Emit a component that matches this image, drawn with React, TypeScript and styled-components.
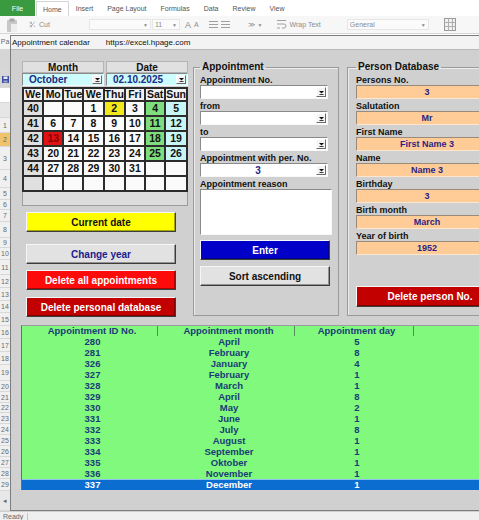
import React from 'react';
import styled, { createGlobalStyle } from 'styled-components';
import { Scissors } from 'lucide-react';

const GlobalStyle = createGlobalStyle`
  html, body { margin: 0; padding: 0; background: #ffffff; }
  body { font-family: "Liberation Sans", Arial, sans-serif; }
  * { box-sizing: border-box; }
`;

const Screen = styled.div`
  width: 479px;
  height: 520px;
  overflow: hidden;
  display: flex;
  flex-direction: column;
  background: #ffffff;
`;

/* ---------- ribbon ---------- */

const TabBar = styled.div`
  height: 16px;
  flex: none;
  display: flex;
  font-size: 7px;
  color: #555;
  background: #ffffff;
`;

const Tab = styled.div<{ $kind?: 'file' | 'active' }>`
  display: flex;
  align-items: center;
  justify-content: center;
  padding: 0 7px;
  ${p => p.$kind === 'file' && `width: 35px; background: #3a9a3f; color: #fff; margin-right: 1px;`}
  ${p => p.$kind === 'active' && `background: #fff; border: 1px solid #d4d4d4; border-bottom: none; margin-top: 1px; padding: 0 6px;`}
`;

const ToolRow = styled.div`
  height: 18px;
  flex: none;
  display: flex;
  align-items: center;
  background: #f7f7f7;
  border-bottom: 1px solid #d6d6d6;
  font-size: 7px;
  color: #8c8c8c;
`;

const Tool = styled.div<{ $ml: number; $w?: number }>`
  margin-left: ${p => p.$ml}px;
  ${p => (p.$w ? `width: ${p.$w}px;` : '')}
  flex: none;
  display: flex;
  align-items: center;
  gap: 3px;
`;

const DropBox = styled(Tool)`
  justify-content: space-between;
  height: 11px;
  padding: 0 2px;
  background: #fbfbfb;
  border: 1px solid #e6e6e6;
`;

/* ---------- sheet + dialog ---------- */

const Workspace = styled.div`
  flex: 1;
  display: flex;
  min-height: 0;
`;

const Strip = styled.div`
  width: 10px;
  flex: none;
  display: flex;
  flex-direction: column;
  background: #e4e4e4;
`;

const StripCell = styled.div<{ $h: number; $bg: string }>`
  height: ${p => p.$h}px;
  flex: none;
  background: ${p => p.$bg};
  display: flex;
  align-items: center;
  justify-content: center;
  font-size: 7px;
  color: #6a6a6a;
  border-bottom: 1px solid #d8d8d8;
  overflow: hidden;
  white-space: nowrap;
`;

const Dialog = styled.div`
  flex: none;
  width: 500px;
  height: 476px;
  margin-top: 1px;
  display: flex;
  flex-direction: column;
  background: #d0d0d0;
  border: 1px solid #7c7c7c;
  border-right: none;
`;

const TitleBar = styled.div`
  height: 14px;
  flex: none;
  display: flex;
  align-items: center;
  padding-left: 1px;
  gap: 16px;
  background: #f3f3f3;
  border-bottom: 1px solid #b8b8b8;
  font-size: 8px;
  color: #111;
`;

const Body = styled.div`
  flex: 1;
  padding: 11px 0 0 11px;
  display: flex;
  flex-direction: column;
`;

const TopSection = styled.div`
  display: flex;
  align-items: flex-start;
`;

const LeftCol = styled.div`
  width: 166px;
  flex: none;
  margin-right: 5px;
  display: flex;
  flex-direction: column;
`;

const PairRow = styled.div`
  display: grid;
  grid-template-columns: 82px 82px;
  gap: 2px;
`;

const HeadBox = styled.div`
  height: 12px;
  display: flex;
  align-items: center;
  justify-content: center;
  background: #e0e0e0;
  border: 1px solid #b4b4b4;
  font-size: 10px;
  font-weight: bold;
  color: #111;
`;

const Combo = styled.div<{ $bg: string; $h: number; $center?: boolean }>`
  height: ${p => p.$h}px;
  display: flex;
  align-items: stretch;
  background: ${p => p.$bg};
  border: 1px solid;
  border-color: #8a8a8a #f8f8f8 #f8f8f8 #8a8a8a;
  font-size: 10px;
  font-weight: bold;
  color: #1c2a86;
`;

const ComboText = styled.span<{ $center?: boolean }>`
  flex: 1;
  display: flex;
  align-items: center;
  justify-content: ${p => (p.$center ? 'center' : 'flex-start')};
  padding-left: ${p => (p.$center ? '0' : '6px')};
`;

const DropBtn = styled.span`
  width: 10px;
  flex: none;
  margin: 1px;
  display: flex;
  align-items: center;
  justify-content: center;
  background: #f4f4f4;
  border: 1px solid;
  border-color: #ffffff #6a6a6a #6a6a6a #ffffff;
`;

const Arrow = () => (
  <svg width="5" height="5" viewBox="0 0 5 5">
    <path d="M0 1h5L2.5 3.6z" fill="#111" />
    <rect x="0.5" y="4" width="4" height="0.8" fill="#111" />
  </svg>
);

const CalGrid = styled.div`
  margin-top: 1px;
  display: grid;
  grid-template-columns: repeat(8, 1fr);
  grid-template-rows: 11px repeat(6, 13px);
  gap: 2px;
  padding: 2px;
  background: #2c2c2c;
`;

type Tone = 'head' | 'week' | 'plain' | 'sat' | 'sun' | 'today' | 'mark';

const toneBg: Record<Tone, string> = {
  head: '#f0f0f0',
  week: '#e0e0e0',
  plain: '#fbfbfb',
  sat: '#7ede7e',
  sun: '#c8f6f6',
  today: '#f2e61c',
  mark: '#e01212',
};

const CalCell = styled.div<{ $tone: Tone }>`
  background: ${p => toneBg[p.$tone]};
  color: ${p => (p.$tone === 'mark' ? '#8c0000' : '#111')};
  display: flex;
  align-items: center;
  justify-content: center;
  font-size: 10.5px;
  font-weight: bold;
  line-height: 1;
`;

const InfoBox = styled.div`
  height: 14px;
  background: #dcdcdc;
  border: 1px solid #9c9c9c;
  border-top: none;
`;

const Btn = styled.button<{ $bg: string; $fg: string; $mt: number; $w: number; $h?: number }>`
  width: ${p => p.$w}px;
  height: ${p => p.$h ?? 20}px;
  margin-top: ${p => p.$mt}px;
  padding: 0;
  display: flex;
  align-items: center;
  justify-content: center;
  font-family: inherit;
  font-size: 10px;
  font-weight: bold;
  background: ${p => p.$bg};
  color: ${p => p.$fg};
  border: 1px solid;
  border-color: #f6f6f6 #3c3c3c #3c3c3c #f6f6f6;
  box-shadow: inset -1px -1px 0 rgba(0, 0, 0, 0.35);
`;

const LeftBtn = styled(Btn)`
  margin-left: 4px;
`;

const Frame = styled.fieldset<{ $w: number; $pl: number; $ml?: number }>`
  width: ${p => p.$w}px;
  height: 255px;
  flex: none;
  margin: 0 0 0 ${p => p.$ml ?? 0}px;
  padding: 1px 0 0 ${p => p.$pl}px;
  border: 1px solid #9a9a9a;
  box-shadow: inset 1px 1px 0 #ececec;
  display: flex;
  flex-direction: column;
`;

const Legend = styled.legend`
  padding: 0 2px;
  font-size: 10px;
  font-weight: bold;
  line-height: 12px;
  color: #111;
`;

const FieldLabel = styled.div`
  height: 11px;
  display: flex;
  align-items: center;
  font-size: 9px;
  font-weight: bold;
  color: #111;
  white-space: nowrap;
`;

const FieldGap = styled.div`
  height: 1px;
  flex: none;
`;

const Memo = styled.div`
  width: 132px;
  height: 46px;
  background: #ffffff;
  border: 1px solid;
  border-color: #8a8a8a #f8f8f8 #f8f8f8 #8a8a8a;
`;

const PersonField = styled.div`
  width: 142px;
  height: 14px;
  display: flex;
  align-items: center;
  justify-content: center;
  background: #ffcb96;
  border: 1px solid;
  border-color: #9a8a7a #fbe6d0 #fbe6d0 #9a8a7a;
  font-size: 9px;
  font-weight: bold;
  color: #2b1f86;
`;

/* ---------- table ---------- */

const Table = styled.div`
  margin: 8px 0 0 -1px;
  width: 470px;
  background: #80f97c;
  border-top: 1px solid #9c9c9c;
  border-left: 1px solid #6c6c6c;
  display: flex;
  flex-direction: column;
`;

const TRow = styled.div<{ $sel?: boolean; $head?: boolean }>`
  height: ${p => (p.$head ? 10 : 11)}px;
  display: grid;
  grid-template-columns: 136px 137px 119px 1fr;
  background: ${p => (p.$sel ? '#0b6dd0' : 'transparent')};
  color: ${p => (p.$sel ? '#ffffff' : '#1b3c78')};
  font-size: 9.5px;
  font-weight: bold;
  ${p => p.$sel && 'box-shadow: inset 0 1px 0 #8fc2f0;'}
`;

const TCell = styled.div<{ $head?: boolean }>`
  display: flex;
  align-items: center;
  justify-content: center;
  padding-left: 5px;
  line-height: 1;
  ${p => p.$head && 'border-right: 1px solid #4f8f5a;'}
`;

const StatusBar = styled.div`
  height: 9px;
  flex: none;
  display: flex;
  align-items: center;
  padding-left: 3px;
  background: #efefef;
  border-top: 1px solid #cfcfcf;
  font-size: 7px;
  color: #666;
`;

const StatusSep = styled.span`
  width: 1px;
  height: 7px;
  margin-left: 4px;
  background: #c4c4c4;
`;

/* ---------- data ---------- */

const tabs = ['Insert', 'Page Layout', 'Formulas', 'Data', 'Review', 'View'];

const stripTop = [
  { h: 16, bg: '#f7f7f7', text: 'Pa' },
  { h: 22, bg: '#d6d6d6', text: '' },
  { h: 16, bg: '#d6d6d6', text: 'save' },
  { h: 15, bg: '#ffffff', text: '' },
  { h: 15, bg: '#e6e6e6', text: '' },
];

const rowHeights = [15, 14, 23, 18, 12, 10, 12, 16, 10, 12, 15, 13, 13, 12, 13, 13, 13, 13, 16, 11, 11, 10, 11, 11, 11, 11, 11, 11, 12];

const weeks = [
  ['40', '', '', '1', '2', '3', '4', '5'],
  ['41', '6', '7', '8', '9', '10', '11', '12'],
  ['42', '13', '14', '15', '16', '17', '18', '19'],
  ['43', '20', '21', '22', '23', '24', '25', '26'],
  ['44', '27', '28', '29', '30', '31', '', ''],
  ['', '', '', '', '', '', '', ''],
];

const dayHeads = ['We', 'Mo', 'Tue', 'We', 'Thu', 'Fri', 'Sat', 'Sun'];

function toneFor(col: number, v: string): Tone {
  if (col === 0) return 'week';
  if (v === '2') return 'today';
  if (v === '13') return 'mark';
  if (v && col === 6) return 'sat';
  if (v && col === 7) return 'sun';
  return 'plain';
}

const apptFields = ['Appointment No.', 'from', 'to', 'Appointment with per. No.'];

const personFields = [
  ['Persons No.', '3'],
  ['Salutation', 'Mr'],
  ['First Name', 'First Name 3'],
  ['Name', 'Name 3'],
  ['Birthday', '3'],
  ['Birth month', 'March'],
  ['Year of birth', '1952'],
];

const appts: [number, string, number][] = [
  [280, 'April', 5],
  [281, 'February', 8],
  [326, 'January', 4],
  [327, 'February', 1],
  [328, 'March', 1],
  [329, 'April', 8],
  [330, 'May', 2],
  [331, 'June', 1],
  [332, 'July', 8],
  [333, 'August', 1],
  [334, 'September', 1],
  [335, 'Oktober', 1],
  [336, 'November', 1],
  [337, 'December', 1],
];

/* ---------- pieces ---------- */

const SaveIcon = () => (
  <svg width="7" height="7" viewBox="0 0 7 7">
    <rect x="0" y="0" width="7" height="7" fill="#3d4fa0" />
    <rect x="1.5" y="0.5" width="4" height="2.5" fill="#e8e8f4" />
    <rect x="1.5" y="4.5" width="4" height="2" fill="#9aa6d6" />
  </svg>
);

const ClipIcon = () => (
  <svg width="12" height="14" viewBox="0 0 12 14">
    <rect x="1" y="2" width="10" height="12" rx="1" fill="#c8c8c8" />
    <rect x="3.5" y="0.5" width="5" height="3" fill="#a8a8a8" />
    <rect x="5" y="6" width="6" height="8" fill="#eeeeee" />
  </svg>
);

const AlignIcon = () => (
  <svg width="9" height="7" viewBox="0 0 9 7">
    <rect y="0" width="9" height="1" fill="#a0a0a0" />
    <rect y="3" width="9" height="1" fill="#a0a0a0" />
    <rect y="6" width="9" height="1" fill="#a0a0a0" />
  </svg>
);

const WrapIcon = () => (
  <svg width="10" height="9" viewBox="0 0 10 9">
    <rect y="0" width="9" height="1" fill="#a0a0a0" />
    <path d="M0 4h7a2 2 0 0 1 0 4H5" stroke="#a0a0a0" fill="none" />
    <rect y="7.5" width="3" height="1" fill="#a0a0a0" />
  </svg>
);

const GridIcon = () => (
  <svg width="12" height="13" viewBox="0 0 12 13">
    <rect x="0.5" y="0.5" width="11" height="12" fill="#eef2ee" stroke="#9a9a9a" />
    <path d="M0.5 4.5h11M0.5 8.5h11M4.5 0.5v12M8.5 0.5v12" stroke="#b0b0b0" />
  </svg>
);

const Small = styled.span`
  font-size: 5px;
`;

export default function App() {
  return (
    <Screen>
      <GlobalStyle />

      <TabBar>
        <Tab $kind="file">File</Tab>
        <Tab $kind="active">Home</Tab>
        {tabs.map(t => (
          <Tab key={t}>{t}</Tab>
        ))}
      </TabBar>

      <ToolRow>
        <Tool $ml={6}>
          <ClipIcon />
        </Tool>
        <Tool $ml={11}>
          <Scissors size={7} color="#9a9a9a" />
          Cut
        </Tool>
        <DropBox $ml={39} $w={62}>
          <span />
          <Small>▼</Small>
        </DropBox>
        <DropBox $ml={1} $w={28}>
          11
          <Small>▼</Small>
        </DropBox>
        <Tool $ml={5}>
          <span style={{ fontSize: 9 }}>A</span>
          <span style={{ fontSize: 7 }}>A</span>
        </Tool>
        <Tool $ml={10}>
          <AlignIcon />
          <AlignIcon />
        </Tool>
        <Tool $ml={18}>
          ≫ <Small>▼</Small>
        </Tool>
        <Tool $ml={14}>
          <WrapIcon />
          Wrap Text
        </Tool>
        <DropBox $ml={26} $w={82}>
          General
          <Small>▼</Small>
        </DropBox>
        <Tool $ml={15}>
          <GridIcon />
        </Tool>
      </ToolRow>

      <Workspace>
        <Strip>
          {stripTop.map((s, i) => (
            <StripCell key={'t' + i} $h={s.h} $bg={s.bg}>
              {s.text === 'save' ? <SaveIcon /> : s.text}
            </StripCell>
          ))}
          {rowHeights.map((h, i) => (
            <StripCell key={i} $h={h} $bg={i === 1 ? '#f1c46c' : '#f0f0f0'}>
              {i + 1}
            </StripCell>
          ))}
          <StripCell $h={20} $bg="#e8e8e8">◂</StripCell>
        </Strip>

        <Dialog>
          <TitleBar>
            <span>Appointment calendar</span>
            <span>https://excel.hpage.com</span>
          </TitleBar>

          <Body>
            <TopSection>
              <LeftCol>
                <PairRow>
                  <HeadBox>Month</HeadBox>
                  <HeadBox>Date</HeadBox>
                </PairRow>
                <PairRow>
                  <Combo $bg="#ccfcfc" $h={13}>
                    <ComboText>October</ComboText>
                    <DropBtn>
                      <Arrow />
                    </DropBtn>
                  </Combo>
                  <Combo $bg="#ccfcfc" $h={13}>
                    <ComboText>02.10.2025</ComboText>
                    <DropBtn>
                      <Arrow />
                    </DropBtn>
                  </Combo>
                </PairRow>
                <CalGrid>
                  {dayHeads.map((d, i) => (
                    <CalCell key={'h' + i} $tone="head">
                      {d}
                    </CalCell>
                  ))}
                  {weeks.map((w, r) =>
                    w.map((v, c) => (
                      <CalCell key={r + '-' + c} $tone={toneFor(c, v)}>
                        {v}
                      </CalCell>
                    ))
                  )}
                </CalGrid>
                <InfoBox />
                <LeftBtn $bg="#ffff00" $fg="#111" $mt={6} $w={150}>
                  Current date
                </LeftBtn>
                <LeftBtn $bg="#e2e2e2" $fg="#1c1c8c" $mt={12} $w={150}>
                  Change year
                </LeftBtn>
                <LeftBtn $bg="#ff0a0a" $fg="#ffffff" $mt={6} $w={150}>
                  Delete all appointments
                </LeftBtn>
                <LeftBtn $bg="#c20000" $fg="#ffffff" $mt={7} $w={150}>
                  Delete personal database
                </LeftBtn>
              </LeftCol>

              <Frame $w={146} $pl={6}>
                <Legend>Appointment</Legend>
                {apptFields.map(f => (
                  <React.Fragment key={f}>
                    <FieldLabel>{f}</FieldLabel>
                    <Combo $bg="#ffffff" $h={14} style={{ width: 128 }}>
                      <ComboText $center>{f === 'Appointment with per. No.' ? '3' : ''}</ComboText>
                      <DropBtn>
                        <Arrow />
                      </DropBtn>
                    </Combo>
                    <FieldGap />
                  </React.Fragment>
                ))}
                <FieldLabel>Appointment reason</FieldLabel>
                <Memo />
                <Btn $bg="#0000c8" $fg="#ffffff" $mt={5} $w={130}>
                  Enter
                </Btn>
                <Btn $bg="#e2e2e2" $fg="#111" $mt={6} $w={130}>
                  Sort ascending
                </Btn>
              </Frame>

              <Frame $w={160} $pl={8} $ml={8}>
                <Legend>Person Database</Legend>
                {personFields.map(([label, value]) => (
                  <React.Fragment key={label}>
                    <FieldLabel>{label}</FieldLabel>
                    <PersonField>{value}</PersonField>
                    <FieldGap />
                  </React.Fragment>
                ))}
                <Btn $bg="#c20000" $fg="#ffffff" $mt={30} $w={148} $h={21}>
                  Delete person No.
                </Btn>
              </Frame>
            </TopSection>

            <Table>
              <TRow $head>
                <TCell $head>Appointment ID No.</TCell>
                <TCell $head>Appointment month</TCell>
                <TCell $head>Appointment day</TCell>
                <TCell />
              </TRow>
              {appts.map(([id, month, day], i) => (
                <TRow key={id} $sel={i === appts.length - 1}>
                  <TCell>{id}</TCell>
                  <TCell>{month}</TCell>
                  <TCell>{day}</TCell>
                  <TCell />
                </TRow>
              ))}
            </Table>
          </Body>
        </Dialog>
      </Workspace>

      <StatusBar>
        Ready
        <StatusSep />
      </StatusBar>
    </Screen>
  );
}
